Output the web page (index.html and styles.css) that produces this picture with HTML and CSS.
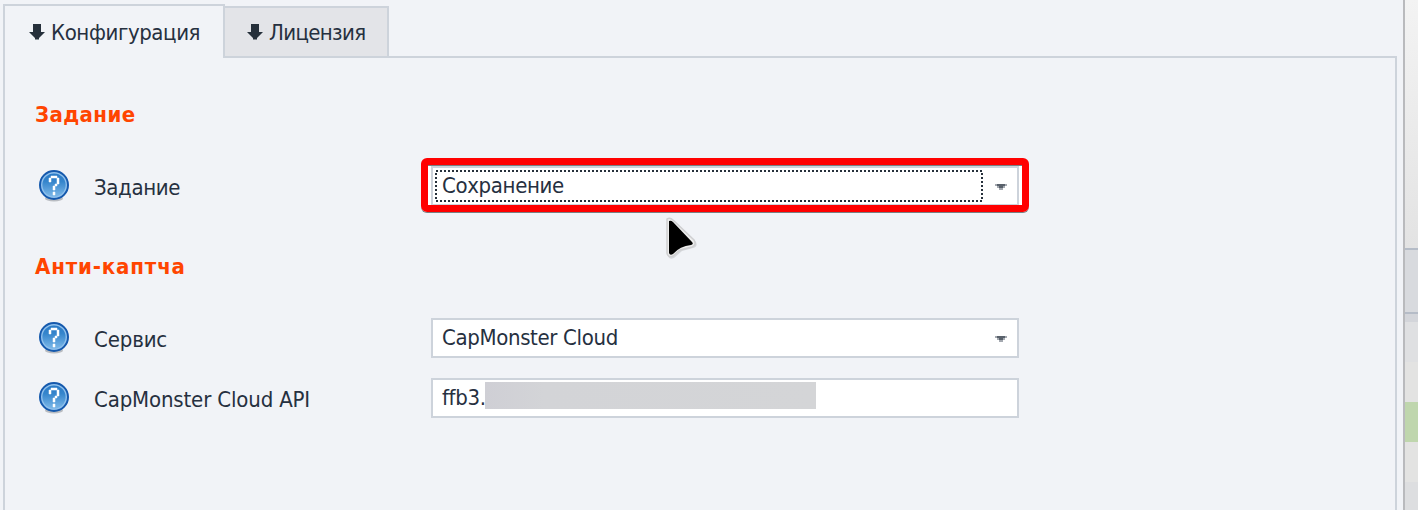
FILE: index.html
```html
<!DOCTYPE html>
<html lang="ru">
<head>
<meta charset="utf-8">
<title>Конфигурация</title>
<link rel="stylesheet" href="styles.css">
</head>
<body>
<svg class="defs" width="0" height="0" aria-hidden="true">
  <defs>
    <linearGradient id="blue" x1="0" y1="0" x2="0" y2="1">
      <stop offset="0" stop-color="#2a7ac6"/>
      <stop offset=".35" stop-color="#3585cc"/>
      <stop offset="1" stop-color="#7db8e8"/>
    </linearGradient>
    <symbol id="help" viewBox="0 0 32 34">
      <ellipse cx="16" cy="29.500" rx="9" ry="3" fill="#b9bcc2"/>
      <circle cx="16" cy="16" r="14" fill="#8fc0ec" stroke="#1559ad" stroke-width="2"/>
      <circle cx="16" cy="16" r="11.600" fill="url(#blue)"/>
      <path d="M13 7h6v2h2v6h-2v2h-2v4h-2v-4h2v-2h2V9h-6v4h-2V9h2zM15 23h2v3h-2z" fill="#fff" stroke="#fff" stroke-width=".5"/>
    </symbol>
    <symbol id="down" viewBox="0 0 16 16">
      <path d="M4 0h8v8h4l-6 6v1.500H6V14L0 8h4z" fill="#26303b"/>
    </symbol>
    <symbol id="caret" viewBox="0 0 12 6">
      <path d="M0 0h12v2h-2v2H8v2H4V4H2V2H0z" fill="#a4a9b0"/>
      <path d="M2 0h8v2H8v2H4V2H2z" fill="#59616b"/>
    </symbol>
  </defs>
</svg>
<div class="app">
  <main class="window">
    <nav class="tabs">
      <div class="tab active"><svg class="down"><use href="#down"/></svg><span class="t-config">Конфигурация</span></div>
      <div class="tab idle"><svg class="down"><use href="#down"/></svg><span class="t-license">Лицензия</span></div>
      <div class="rule"></div>
    </nav>
    <section class="panel">
      <h2 class="t-task">Задание</h2>
      <div class="row first">
        <svg class="help"><use href="#help"/></svg>
        <label class="l-task">Задание</label>
        <div class="field">
          <span class="v-save">Сохранение</span>
          <svg class="caret"><use href="#caret"/></svg>
          <svg class="focus"><rect x="1" y="1" width="546" height="30"/></svg>
          <div class="highlight"></div>
          <svg class="cursor" viewBox="0 0 40 46">
            <path class="shade" d="M6 4Q9 3 11 5L34 26Q36 31 31 32L20 35L12 42Q7 44 6 40Z"/>
            <path class="edge" d="M5 3Q8 1 11 4L32 24Q35 29 30 31L18 34L11 40Q6 42 5 37Z"/>
            <path d="M7 5Q9 4 11 6L30 26Q32 28 29 29Q18 30 11 38Q8 40 7 37Z"/>
          </svg>
        </div>
      </div>
      <h2 class="second t-captcha">Анти-каптча</h2>
      <div class="row">
        <svg class="help"><use href="#help"/></svg>
        <label class="l-service">Сервис</label>
        <div class="field">
          <span class="v-cloud">CapMonster Cloud</span>
          <svg class="caret"><use href="#caret"/></svg>
        </div>
      </div>
      <div class="row">
        <svg class="help"><use href="#help"/></svg>
        <label class="l-api">CapMonster Cloud API</label>
        <div class="field key"><span class="v-key">ffb3.</span><i class="mask"></i></div>
      </div>
    </section>
  </main>
  <aside class="side">
    <div class="top"></div><div class="bar"></div><div class="a"></div><div class="b"></div><div class="green"></div><div class="b"></div><div class="d"></div>
  </aside>
</div>
</body>
</html>
```
FILE: styles.css
```css
* { box-sizing: border-box; }
body { margin: 0; overflow: hidden; background: #f1f3f7; color: #26303f; font: 22px/26px "DejaVu Sans Condensed", "DejaVu Sans", sans-serif; font-stretch: condensed; }
.defs { position: absolute; }
svg { display: block; flex: none; }
span, label, h2 { white-space: nowrap; }
.app { display: flex; height: 510px; }
.window { display: flex; flex-direction: column; width: 1403px; padding: 4px 6px 0 3px; }
.tabs { display: flex; height: 54px; align-items: flex-end; }
.tab { display: flex; align-items: center; border: 2px solid #cdd3db; }
.active { width: 222px; height: 54px; padding: 2px 0 0 24px; border-bottom: 0; }
.idle { width: 164px; height: 52px; padding: 2px 0 0 22px; border-left: 0; background: #e3e4e8; }
.rule { flex: 1; height: 2px; background: #cdd3db; }
.down { width: 16px; height: 16px; margin: 0 6px 2px 0; }
.panel { flex: 1; border: solid #cdd3db; border-width: 0 2px; padding: 44px 0 0 30px; }
h2 { margin: 0; height: 26px; color: #ff4500; font-size: 22px; line-height: 26px; }
.row { display: flex; align-items: flex-start; height: 40px; margin-bottom: 20px; }
.row.first { margin: 38px 0 48px; }
.second { margin-bottom: 38px; }
.help { width: 32px; height: 34px; margin: 3px 0 0 3px; }
label { width: 337px; margin: 9px 0 0 24px; }
.field { position: relative; display: flex; align-items: center; width: 588px; height: 40px; padding: 0 10px 0 9px; border: 2px solid #cdd3db; background: #fff; }
.field span { flex: 1; }
.caret { width: 12px; height: 6px; margin-top: 2px; shape-rendering: crispEdges; }
.focus { position: absolute; left: 2px; top: 2px; width: 548px; height: 32px; }
.focus rect { fill: none; stroke: #26303b; stroke-width: 2; stroke-dasharray: 2 2; shape-rendering: crispEdges; }
.highlight { position: absolute; left: -12px; top: -10px; width: 608px; height: 54px; border: 7px solid #f00; border-radius: 6px; box-shadow: 0 1px 0 #788083, inset 0 1px 0 #788083, inset 3px 0 0 #fff, inset -3px 0 0 #fff; }
.cursor { position: absolute; left: 229px; top: 48px; width: 40px; height: 46px; }
.cursor .shade { fill: #d5d7db; }
.cursor .edge { fill: #eee; stroke: #cfcfd1; stroke-width: 1.5; }
.field .v-key { flex: none; }
.mask { position: absolute; left: 52px; top: 2px; width: 331px; height: 27px; background: linear-gradient(90deg, #cfcfd5, #d3d4d7 18%, #d4d5d7); }
.t-config { letter-spacing: -.4px; }
.t-license { letter-spacing: -.65px; }
.t-task { letter-spacing: .4px; }
.t-captcha { letter-spacing: .85px; }
.l-task { letter-spacing: -.35px; }
.l-service { letter-spacing: -.15px; }
.l-api { letter-spacing: -.15px; }
.v-save, .v-cloud, .v-key { letter-spacing: -.35px; }
.side { width: 15px; border-left: 2px solid #b9babd; background: #e3e3e3; }
.top { height: 248px; background: linear-gradient(#f3f3f3, #e3e3e3); }
.bar { height: 66px; border: solid #b5bcc7; border-width: 2px 0; background: #d8dade; }
.a { height: 48px; background: linear-gradient(#d3d5da 8px, #dfe0e2 8px); }
.b { height: 40px; background: #e3e3e2; }
.green { height: 40px; background: #bfd6ad; }
.d { height: 28px; background: #dddee0; }
```
